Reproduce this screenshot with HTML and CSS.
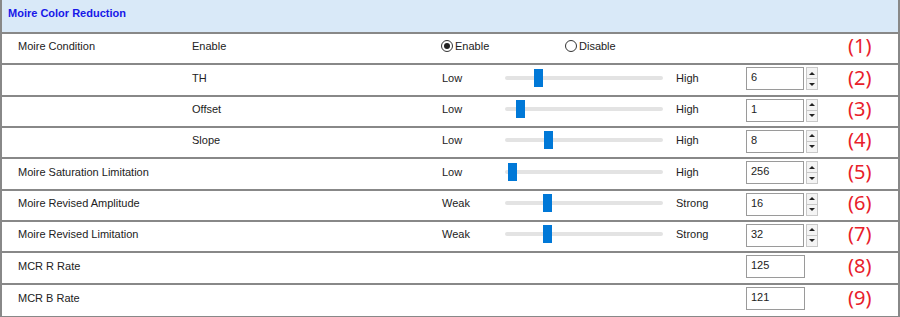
FILE: index.html
```html
<!DOCTYPE html>
<html lang="en">
<head>
  <meta charset="UTF-8">
  <title>Moire Color Reduction</title>
  <link rel="stylesheet" href="styles.css">
</head>
<body>
  <div class="panel">
    <div class="panel-head">Moire Color Reduction</div>

    <div class="row">
      <span class="name">Moire Condition</span>
      <span class="sub">Enable</span>
      <div class="radios">
        <label class="radio"><span class="dot on"></span>Enable</label>
        <label class="radio"><span class="dot"></span>Disable</label>
      </div>
      <span class="tag">(1)</span>
    </div>

    <div class="row">
      <span class="name"></span>
      <span class="sub">TH</span>
      <span class="lo">Low</span>
      <div class="slider"><div class="track"></div><div class="thumb" style="left: 29px"></div></div>
      <span class="hi">High</span>
      <div class="num"><span class="box">6</span><span class="spin"><i class="up"></i><i class="down"></i></span></div>
      <span class="tag">(2)</span>
    </div>

    <div class="row">
      <span class="name"></span>
      <span class="sub">Offset</span>
      <span class="lo">Low</span>
      <div class="slider"><div class="track"></div><div class="thumb" style="left: 11px"></div></div>
      <span class="hi">High</span>
      <div class="num"><span class="box">1</span><span class="spin"><i class="up"></i><i class="down"></i></span></div>
      <span class="tag">(3)</span>
    </div>

    <div class="row">
      <span class="name"></span>
      <span class="sub">Slope</span>
      <span class="lo">Low</span>
      <div class="slider"><div class="track"></div><div class="thumb" style="left: 39px"></div></div>
      <span class="hi">High</span>
      <div class="num"><span class="box">8</span><span class="spin"><i class="up"></i><i class="down"></i></span></div>
      <span class="tag">(4)</span>
    </div>

    <div class="row">
      <span class="name">Moire Saturation Limitation</span>
      <span class="sub"></span>
      <span class="lo">Low</span>
      <div class="slider"><div class="track"></div><div class="thumb" style="left: 3px"></div></div>
      <span class="hi">High</span>
      <div class="num"><span class="box">256</span><span class="spin"><i class="up"></i><i class="down"></i></span></div>
      <span class="tag">(5)</span>
    </div>

    <div class="row">
      <span class="name">Moire Revised Amplitude</span>
      <span class="sub"></span>
      <span class="lo">Weak</span>
      <div class="slider"><div class="track"></div><div class="thumb" style="left: 38px"></div></div>
      <span class="hi">Strong</span>
      <div class="num"><span class="box">16</span><span class="spin"><i class="up"></i><i class="down"></i></span></div>
      <span class="tag">(6)</span>
    </div>

    <div class="row">
      <span class="name">Moire Revised Limitation</span>
      <span class="sub"></span>
      <span class="lo">Weak</span>
      <div class="slider"><div class="track"></div><div class="thumb" style="left: 38px"></div></div>
      <span class="hi">Strong</span>
      <div class="num"><span class="box">32</span><span class="spin"><i class="up"></i><i class="down"></i></span></div>
      <span class="tag">(7)</span>
    </div>

    <div class="row">
      <span class="name">MCR R Rate</span>
      <div class="num only"><span class="box wide">125</span></div>
      <span class="tag">(8)</span>
    </div>

    <div class="row">
      <span class="name">MCR B Rate</span>
      <div class="num only"><span class="box wide">121</span></div>
      <span class="tag">(9)</span>
    </div>
  </div>
</body>
</html>
```

FILE: styles.css
```css
* { box-sizing: border-box; }
body {
  margin: 0;
  font-family: 'Liberation Sans', Arial, sans-serif;
  font-size: 11px;
  color: #222;
  background: #fff;
}

.panel {
  width: 900px;
  border: 2px solid #888;
  border-top: none;
}

.panel-head {
  height: 34px;
  padding: 7px 6px 0;
  background: #d9e9f8;
  border-bottom: 2px solid #888;
  color: #1717e8;
  font-weight: bold;
}

.row {
  display: grid;
  grid-template-columns: 174px 250px 63px 171px 70px 96px 1fr;
  align-items: center;
  height: 31.33px;
  padding: 0 0 5px 16px;
  border-bottom: 2px solid #888;
}

.row:last-child { border-bottom: none; }

.radios {
  grid-column: 3 / 7;
  display: flex;
  margin-left: -1px;
}

.radio {
  display: flex;
  align-items: center;
  width: 124px;
}

.dot {
  width: 12px;
  height: 12px;
  margin-right: 2px;
  border: 1px solid #333;
  border-radius: 50%;
  position: relative;
}

.dot.on::after {
  content: "";
  position: absolute;
  left: 2px;
  top: 2px;
  width: 6px;
  height: 6px;
  border-radius: 50%;
  background: #222;
}

.slider {
  position: relative;
  width: 158px;
  height: 18px;
}

.track {
  margin-top: 7px;
  height: 4px;
  background: #e3e3e3;
  border-radius: 2px;
}

.thumb {
  position: absolute;
  top: 0;
  width: 9px;
  height: 18px;
  background: #0078d7;
}

.num {
  display: flex;
  align-self: start;
  margin-top: 2px;
  gap: 2px;
}

.num.only { grid-column: 6; }

.box {
  width: 58px;
  height: 23px;
  padding: 3px 0 0 4px;
  border: 1px solid #9a9a9a;
  background: #fff;
}

.box.wide { width: 59px; }

.spin {
  display: flex;
  flex-direction: column;
  width: 12px;
  height: 23px;
  border: 1px solid #c8c8c8;
}

.spin i {
  flex: 1;
  display: flex;
  align-items: center;
  justify-content: center;
  background: #f4f4f4;
}

.spin i + i { border-top: 1px solid #c8c8c8; }

.spin i::before {
  content: "";
  border-left: 3px solid transparent;
  border-right: 3px solid transparent;
}

.spin .up::before { border-bottom: 3px solid #222; }
.spin .down::before { border-top: 3px solid #222; }

.tag {
  grid-column: 7;
  margin-left: 6px;
  font-family: 'Noto Sans', sans-serif;
  font-size: 20px;
  color: #e8202a;
  line-height: 1;
}
```
